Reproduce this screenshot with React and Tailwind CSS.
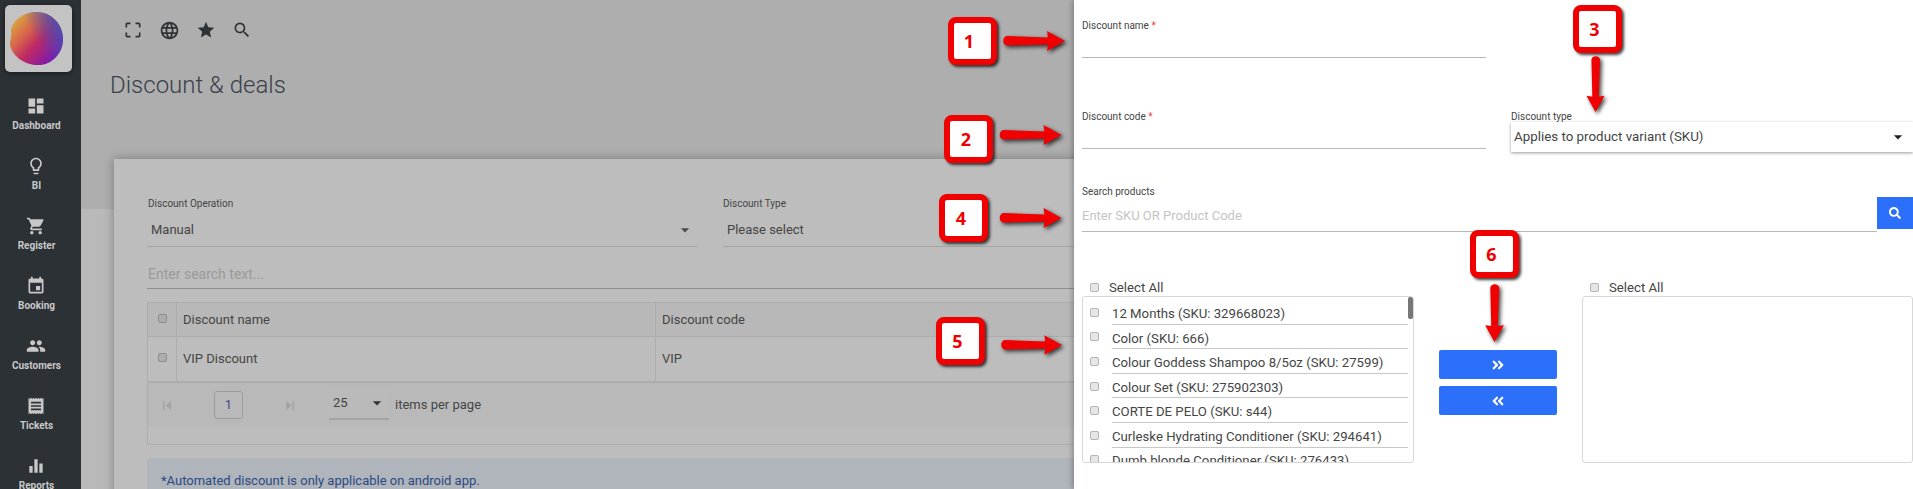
import { MdDashboard, MdLightbulbOutline, MdShoppingCart, MdEvent, MdPeople, MdReceipt, MdEqualizer, MdCropFree, MdLanguage, MdStar, MdSearch, MdArrowDropDown } from "react-icons/md";
import { FaAngleDoubleRight, FaAngleDoubleLeft, FaSearch } from "react-icons/fa";

const navItems = [
  { label: "Dashboard", icon: MdDashboard },
  { label: "BI", icon: MdLightbulbOutline },
  { label: "Register", icon: MdShoppingCart },
  { label: "Booking", icon: MdEvent },
  { label: "Customers", icon: MdPeople },
  { label: "Tickets", icon: MdReceipt },
  { label: "Reports", icon: MdEqualizer },
];

const products = [
  "12 Months (SKU: 329668023)",
  "Color (SKU: 666)",
  "Colour Goddess Shampoo 8/5oz (SKU: 27599)",
  "Colour Set (SKU: 275902303)",
  "CORTE DE PELO (SKU: s44)",
  "Curleske Hydrating Conditioner (SKU: 294641)",
  "Dumb blonde Conditioner (SKU: 276433)",
];

// numbered callouts drawn over the screenshot
const callouts = [
  { n: "1", box: "left-[948px] top-[17px]", text: "pr-[7px]" },
  { n: "2", box: "left-[944px] top-[115px]", text: "pr-[5px]" },
  { n: "4", box: "left-[939px] top-[194px]", text: "pr-[5px]" },
  { n: "3", box: "left-[1573px] top-[5px]", text: "pr-[6px]" },
  { n: "5", box: "left-[936px] top-[317px]", text: "pr-[6px]" },
  { n: "6", box: "left-[1470px] top-[230px]", text: "pr-[6px]" },
];

function Logo() {
  return (
    <svg viewBox="0 0 54 55" className="w-[54px] h-[55px] ml-[-4px]">
      <defs>
        <linearGradient id="blobA" x1="0.05" y1="0.1" x2="0.95" y2="0.9">
          <stop offset="0" stopColor="#d9b23c" />
          <stop offset="0.3" stopColor="#d8694a" />
          <stop offset="0.55" stopColor="#bf2a62" />
          <stop offset="0.85" stopColor="#8a1aa4" />
          <stop offset="1" stopColor="#6a1fb4" />
        </linearGradient>
        <linearGradient id="blobB" x1="1" y1="0.15" x2="0.45" y2="0.45">
          <stop offset="0" stopColor="#3b55b8" />
          <stop offset="1" stopColor="#3b55b8" stopOpacity="0" />
        </linearGradient>
      </defs>
      <path d="M27 1C41 1 53 13 53 28C53 43 41 55 27 54C14 54 1 44 0 33C0 28 2 26 1 20C2 9 14 1 27 1Z" fill="url(#blobA)" />
      <path d="M27 1C41 1 53 13 53 28C53 43 41 55 27 54C14 54 1 44 0 33C0 28 2 26 1 20C2 9 14 1 27 1Z" fill="url(#blobB)" />
    </svg>
  );
}

function Arrow({ down, className }) {
  const d = "M4 6 L45 7.5 L44 1 L62 11 L44 21 L45 14.5 L4 15.5 C-1 15 -1 6.5 4 6 Z";
  return (
    <svg
      viewBox={down ? "0 0 22 62" : "0 0 62 22"}
      className={`absolute overflow-visible drop-shadow-[2px_2px_2px_rgba(0,0,0,0.75)] ${className}`}
    >
      <path d={d} fill="#f00000" transform={down ? "translate(22 0) rotate(90)" : undefined} />
    </svg>
  );
}

function Check() {
  return <span className="block w-[9px] h-[9px] shrink-0 rounded-[2px] border border-[#b4b4b4] bg-[#e6e6e6]" />;
}

function DimCheck() {
  return <span className="block w-[9px] h-[9px] rounded-[2px] border border-[#8d8d8d] bg-[#adadad]" />;
}

function PagerIcon({ flip }) {
  return (
    <svg viewBox="0 0 8 9" className={`w-[8px] h-[9px] ${flip ? "rotate-180" : ""}`}>
      <path d="M0 0H1.5V9H0ZM8 0V9L2.5 4.5Z" fill="#a4a4a4" />
    </svg>
  );
}

function Sidebar() {
  return (
    <div className="w-[81px] shrink-0 h-[489px] overflow-hidden bg-[#2c3136] flex flex-col items-center">
      <div className="shrink-0 mt-[5px] ml-[-4px] w-[67px] h-[67px] rounded-[5px] bg-[#c3c3c3] shadow-[0_1px_4px_rgba(0,0,0,0.5)] flex items-center justify-center">
        <Logo />
      </div>
      <div className="shrink-0 mt-[24px] flex flex-col">
        {navItems.map((item) => {
          const Icon = item.icon;
          return (
            <div key={item.label} className="h-[60px] w-[73px] ml-[-8px] flex flex-col items-center text-[#c8c8c8]">
              <Icon className="w-[20px] h-[20px] ml-[-2px]" />
              <span className="mt-[3px] text-[10px] leading-[14px] font-bold">{item.label}</span>
            </div>
          );
        })}
      </div>
    </div>
  );
}

function MainPage() {
  return (
    <div className="flex-1 min-w-0 bg-[#b9b9b9]">
      <div className="h-[209px] bg-[#aeaeae] pl-[29px]">
        <div className="h-[60px] flex items-center text-[#2f3338]">
          <div className="pl-[13px] flex items-center gap-[16px]">
            <MdCropFree className="w-[20px] h-[20px]" />
            <MdLanguage className="w-[21px] h-[21px]" />
            <MdStar className="w-[20px] h-[20px]" />
            <MdSearch className="w-[20px] h-[20px]" />
          </div>
        </div>
        <h1 className="mt-[10px] text-[24px] leading-[30px] font-light text-[#3a3f4a]">Discount &amp; deals</h1>
      </div>
      <div className="ml-[33px] mt-[-50px] h-[340px] bg-[#bdbdbd] shadow-[0_0_10px_rgba(0,0,0,0.3)] pl-[33px] text-[#454545]">
        <div className="pt-[39px] flex gap-[25px]">
          <div className="w-[551px]">
            <div className="text-[10px] leading-[12px] pl-[1px]">Discount Operation</div>
            <div className="mt-[5px] h-[32px] pl-[4px] pr-[9px] border-b border-[#a4a4a4] flex items-center justify-between text-[13px] pb-[2px]">
              <span>Manual</span>
              <MdArrowDropDown className="w-[20px] h-[20px] mr-[-6px] text-[#4b4b4b]" />
            </div>
          </div>
          <div className="flex-1">
            <div className="text-[10px] leading-[12px]">Discount Type</div>
            <div className="mt-[5px] h-[32px] pl-[4px] border-b border-[#a4a4a4] flex items-center text-[13px] pb-[2px]">
              Please select
            </div>
          </div>
        </div>
        <div className="mt-[17px] h-[25px] border-b border-[#8f8f8f] text-[14px] leading-[20px] pl-[1px] text-[#9a9a9a]">Enter search text...</div>
        <div className="mt-[13px] border border-[#adadad] border-b-0 text-[13px]">
          <div className="h-[34px] bg-[#b8b8b8] grid grid-cols-[29px_479px_1fr] border-b border-[#adadad]">
            <div className="flex items-center justify-center border-r border-[#adadad] pb-[2px]"><DimCheck /></div>
            <div className="flex items-center pl-[6px] border-r border-[#adadad]">Discount name</div>
            <div className="flex items-center pl-[6px]">Discount code</div>
          </div>
          <div className="h-[46px] grid grid-cols-[29px_479px_1fr] border-b-2 border-[#adadad]">
            <div className="flex items-center justify-center border-r border-[#adadad] pb-[4px]"><DimCheck /></div>
            <div className="flex items-center pl-[6px] border-r border-[#adadad]">VIP Discount</div>
            <div className="flex items-center pl-[6px]">VIP</div>
          </div>
          <div className="h-[62px] border-b border-[#adadad]">
            <div className="h-[44px] bg-[#b9b9b9] flex items-center">
              <div className="ml-[15px] w-[51px]"><PagerIcon /></div>
              <div className="w-[29px] h-[28px] rounded-[3px] border border-[#9c9c9c] flex items-center justify-center text-[#3f4a86]">1</div>
              <div className="ml-[43px] w-[43px]"><PagerIcon flip /></div>
              <div className="w-[60px] h-[31px] bg-[#bababa] border-b-2 border-[#a4a4a4] flex items-center justify-between pl-[4px] pr-[2px] mt-[-2px]">
                <span>25</span>
                <MdArrowDropDown className="w-[20px] h-[20px] text-[#333]" />
              </div>
              <span className="ml-[6px]">items per page</span>
            </div>
          </div>
        </div>
        <div className="mt-[13px] h-[60px] rounded-t-[4px] bg-[#b0b4bb] pl-[14px] pt-[15px] text-[13px] leading-[16px] text-[#2b4a84]">
          *Automated discount is only applicable on android app.
        </div>
      </div>
    </div>
  );
}

function ProductRow({ name }) {
  return (
    <div className="h-[24.6px] flex items-center">
      <div className="w-[29px] pl-[7px]"><Check /></div>
      <div className="flex-1 h-full mr-[5px] pt-[4px] border-b border-[#c8c8c8] flex items-center whitespace-nowrap">{name}</div>
    </div>
  );
}

function DiscountPanel() {
  return (
    <div className="absolute left-[1074px] top-0 w-[839px] h-[489px] bg-white shadow-[-2px_0_5px_rgba(0,0,0,0.25)] pl-[8px] text-[#454545]">
      <div className="grid grid-cols-[404px_1fr] gap-[25px]">
        <div className="pt-[20px]">
          <div className="h-[38px] border-b border-[#b8b8b8] text-[10px] leading-[12px]">Discount name <span className="text-[#f04040]">*</span></div>
          <div className="mt-[52px] h-[39px] pt-[1px] border-b border-[#b8b8b8] text-[10px] leading-[12px]">Discount code <span className="text-[#f04040]">*</span></div>
        </div>
        <div className="pt-[111px]">
          <div className="text-[10px] leading-[11px]">Discount type</div>
          <div className="h-[30px] pl-[3px] pr-[5px] bg-white shadow-[0_1px_3px_rgba(0,0,0,0.4)] flex items-center justify-between text-[13.35px]">
            <span>Applies to product variant (SKU)</span>
            <MdArrowDropDown className="w-[20px] h-[20px] text-[#222]" />
          </div>
        </div>
      </div>
      <div className="mt-[33px] flex">
        <div className="flex-1 h-[47px] border-b border-[#b8b8b8]">
          <div className="pt-[1px] text-[10px] leading-[12px]">Search products</div>
          <div className="mt-[10px] text-[13px] leading-[16px] text-[#c4c4c4]">Enter SKU OR Product Code</div>
        </div>
        <div className="mt-[12px] w-[36px] h-[32px] bg-[#2b6ffa] flex items-center justify-center text-white">
          <FaSearch className="w-[12px] h-[12px]" />
        </div>
      </div>
      <div className="mt-[46px] flex text-[13.2px]">
        <div className="w-[332px]">
          <div className="h-[18px] flex items-center gap-[10px] pl-[8px]">
            <Check />
            <span className="mt-[1px]">Select All</span>
          </div>
          <div className="relative h-[167px] rounded-[3px] border border-[#d8d8d8] pt-[3px] overflow-hidden">
            {products.map((name) => <ProductRow key={name} name={name} />)}
            <div className="absolute right-0 top-0 w-[5px] h-[22px] rounded-[2px] bg-[#777777]" />
          </div>
        </div>
        <div className="w-[118px] mx-[25px] pt-[72px] flex flex-col gap-[7px]">
          <div className="h-[29px] rounded-[2px] bg-[#2b6ffa] flex items-center justify-center text-white"><FaAngleDoubleRight className="w-[14px] h-[14px]" /></div>
          <div className="h-[29px] rounded-[2px] bg-[#2b6ffa] flex items-center justify-center text-white"><FaAngleDoubleLeft className="w-[14px] h-[14px]" /></div>
        </div>
        <div className="flex-1">
          <div className="h-[18px] flex items-center gap-[10px] pl-[8px]">
            <Check />
            <span className="mt-[1px]">Select All</span>
          </div>
          <div className="h-[167px] rounded-[3px] border border-[#d8d8d8]" />
        </div>
      </div>
    </div>
  );
}

export default function App() {
  return (
    <div className="relative w-[1913px] h-[489px] overflow-hidden flex font-['Roboto',sans-serif]">
      <Sidebar />
      <MainPage />
      <DiscountPanel />

      {callouts.map((c) => (
        <div
          key={c.n}
          className={`absolute ${c.box} w-[49px] h-[48px] rounded-[8px] border-[6px] border-[#f00000] bg-white shadow-[2px_2px_3px_rgba(0,0,0,0.75)] flex items-center justify-center font-['Open_Sans',sans-serif] font-bold text-[18px] text-[#f00000] ${c.text}`}
        >
          {c.n}
        </div>
      ))}
      <Arrow className="left-[1003px] top-[30px] w-[62px] h-[22px]" />
      <Arrow className="left-[999px] top-[124px] w-[63px] h-[22px]" />
      <Arrow className="left-[997px] top-[207px] w-[67px] h-[22px]" />
      <Arrow className="left-[1001px] top-[334px] w-[61px] h-[22px]" />
      <Arrow down className="left-[1585px] top-[56px] w-[21px] h-[56px]" />
      <Arrow down className="left-[1484px] top-[284px] w-[21px] h-[58px]" />
    </div>
  );
}
